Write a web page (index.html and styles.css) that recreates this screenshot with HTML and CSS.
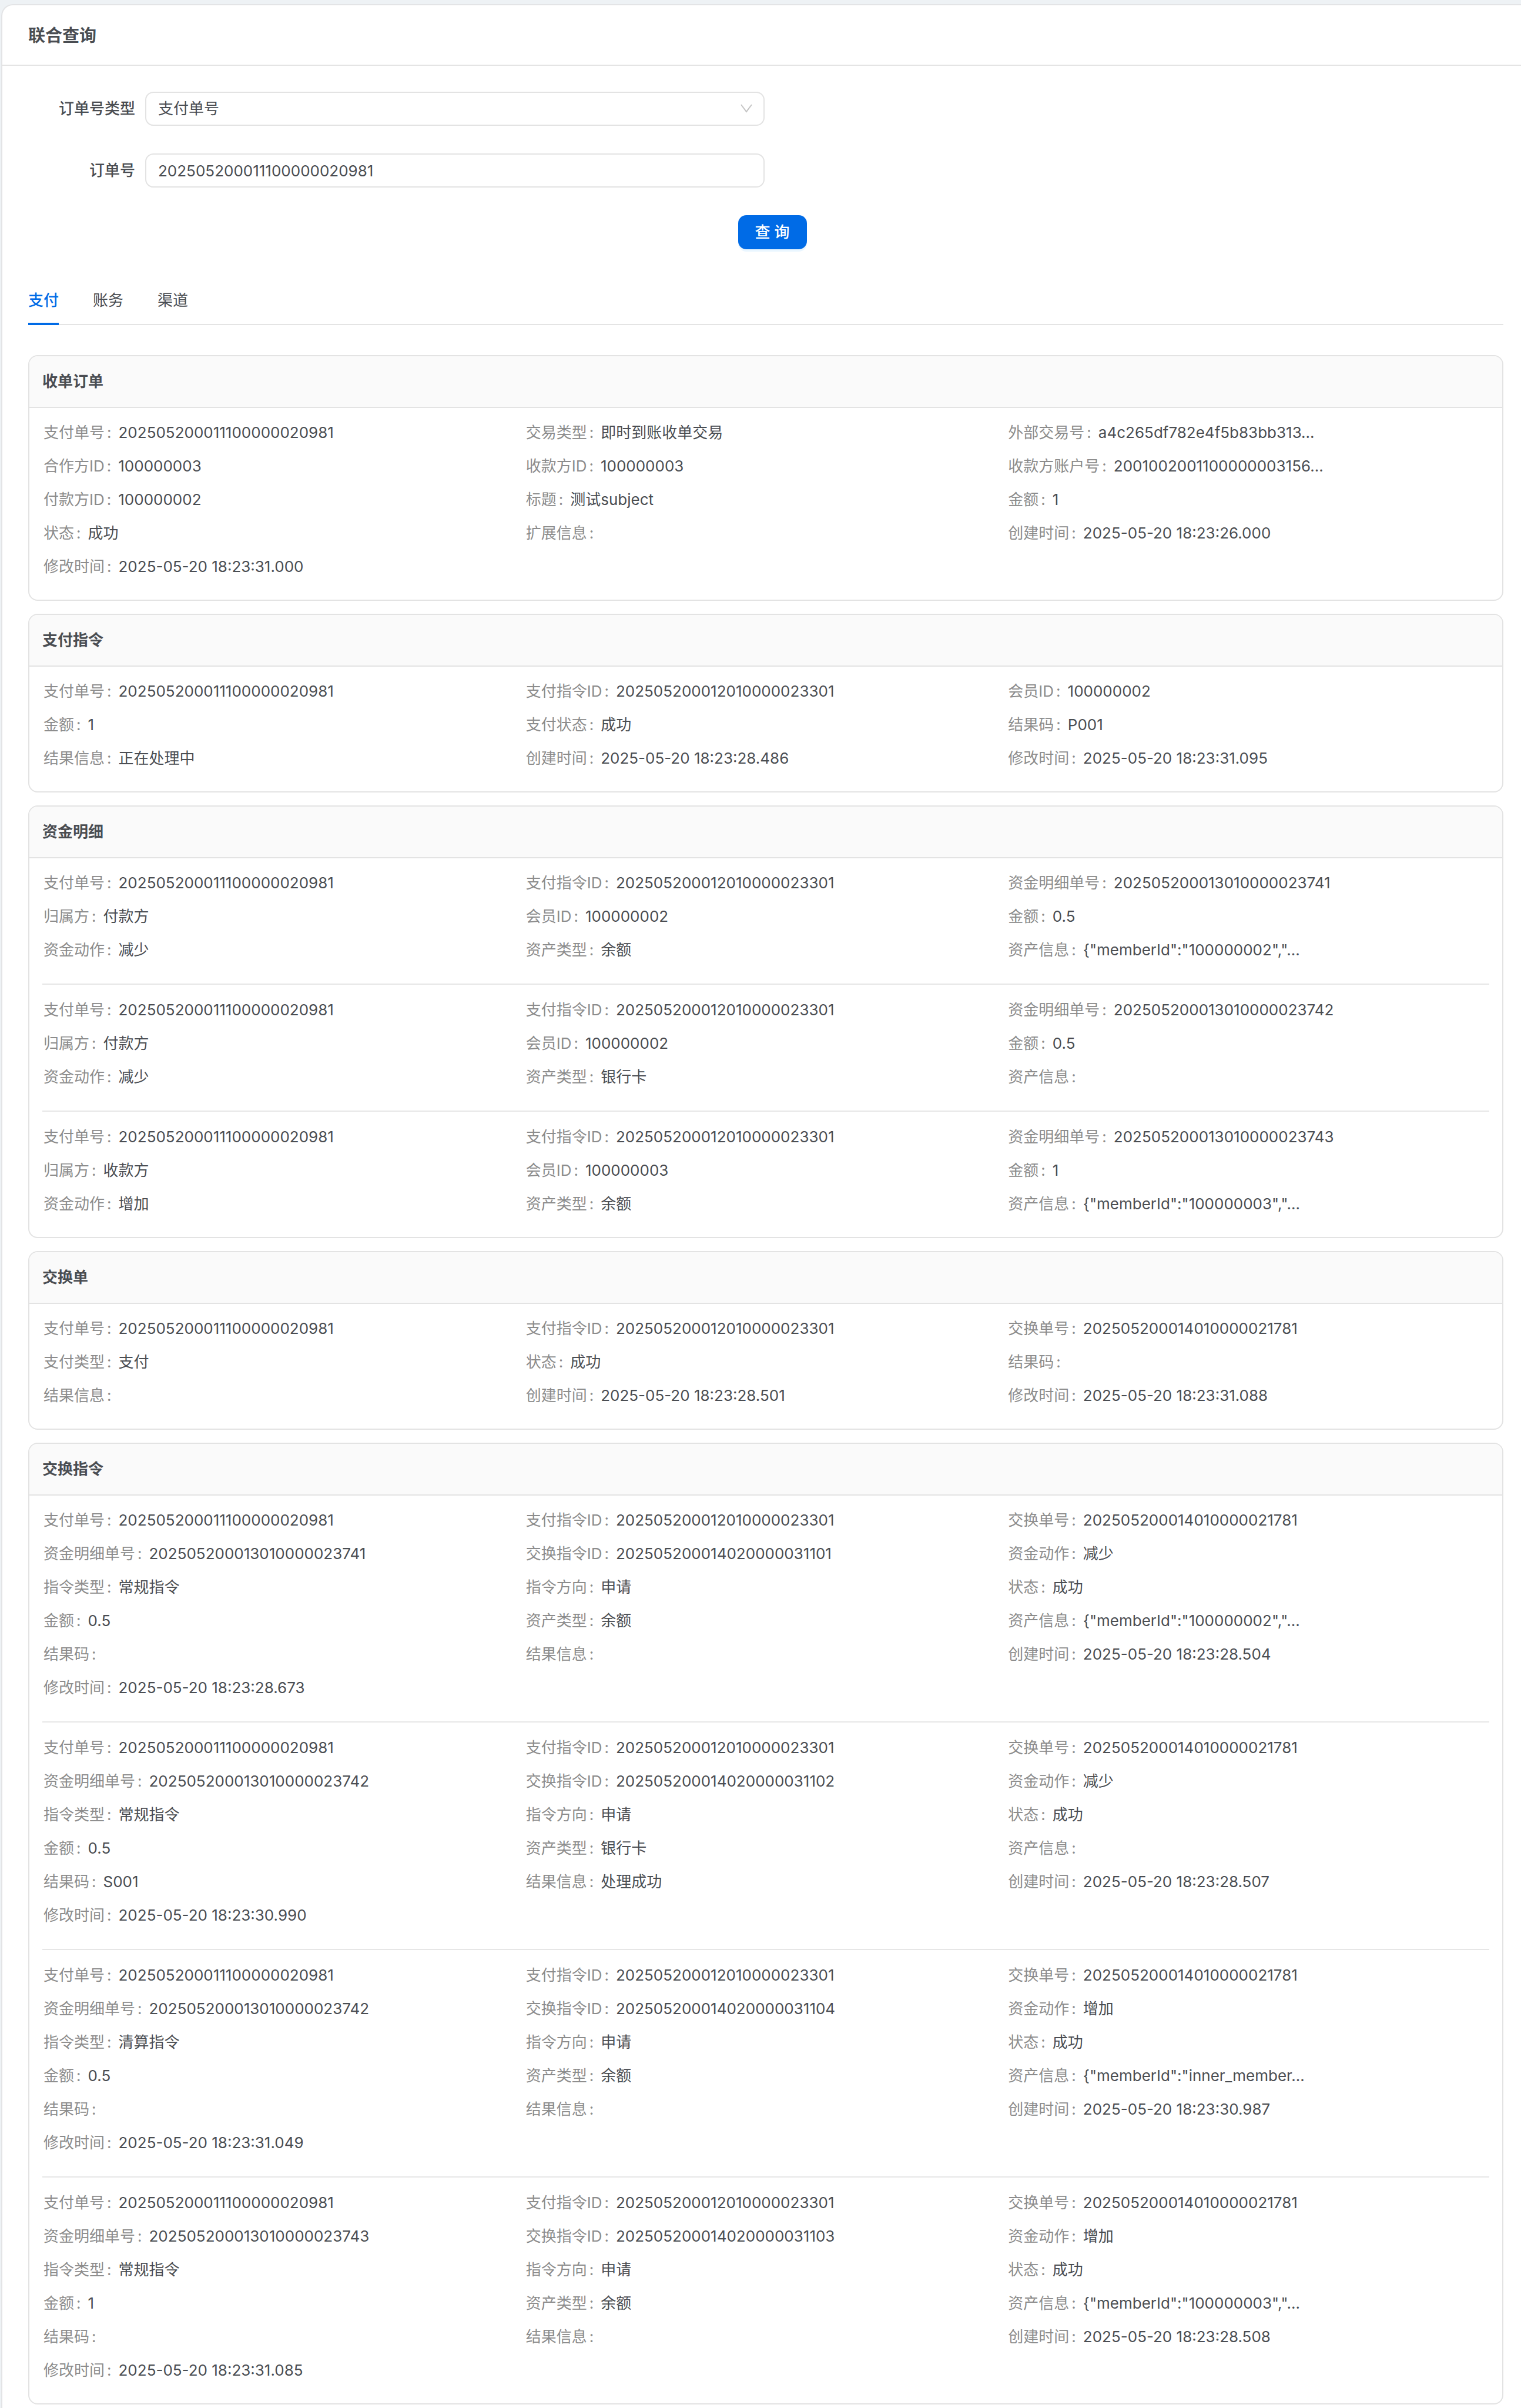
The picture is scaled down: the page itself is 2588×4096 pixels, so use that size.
FILE: index.html
```html
<!DOCTYPE html>
<html lang="zh-CN">
<head>
<meta charset="utf-8">
<meta name="viewport" content="width=device-width, initial-scale=1">
<title>联合查询</title>
<link rel="stylesheet" href="styles.css">
</head>
<body>
<main class="panel">
  <header class="panel-head"><h1 class="panel-title">联合查询</h1></header>
  <div class="panel-body">
    <form class="query">
      <div class="field">
        <label class="field-label" for="order-type">订单号类型</label>
        <div class="select-wrap">
          <select class="control" id="order-type"><option>支付单号</option></select>
          <svg class="select-arrow" viewBox="0 0 22 22" aria-hidden="true"><path d="M2 4 L11 16 L20 4" fill="none" stroke="#c4c4c4" stroke-width="2"/></svg>
        </div>
      </div>
      <div class="field">
        <label class="field-label" for="order-no">订单号</label>
        <input class="control" id="order-no" type="text" value="202505200011100000020981">
      </div>
      <div class="actions"><button class="btn-primary" type="button">查 询</button></div>
    </form>
    <nav class="tabs">
      <a class="tab tab-active" href="#pay">支付</a>
      <a class="tab" href="#account">账务</a>
      <a class="tab" href="#channel">渠道</a>
    </nav>
    <div class="cards" id="cards"></div>
  </div>
</main>
<script src="data.js"></script>
</body>
</html>
```
FILE: styles.css
```css
* { box-sizing: border-box; }

body {
  margin: 0;
  background: #eef2f5;
  color: #4a4d52;
  font-family: Inter, "Noto Sans CJK SC", sans-serif;
  font-size: 26px;
  line-height: 40px;
}

.panel {
  margin: 7px 0 0 2px;
  min-height: calc(100vh - 7px);
  background: #fff;
  border: 2px solid #e3e4e6;
  border-width: 2px 0 0 2px;
  border-radius: 20px 0 0 0;
}

.panel-head {
  display: flex;
  align-items: center;
  height: 103px;
  padding: 2px 44px 0;
  border-bottom: 2px solid #e4e4e4;
}

.panel-title { margin: 0; font-size: 29px; font-weight: 600; }

.panel-body { padding: 44px 30px 6px 44px; }

.query { display: flex; flex-direction: column; gap: 47px; }

.field { display: flex; align-items: center; gap: 17px; width: 50%; padding-right: 2px; }

.field-label { width: 182px; flex: none; text-align: right; font-weight: 500; }

.select-wrap { position: relative; flex: 1; display: flex; }

.control {
  flex: 1;
  width: 100%;
  height: 58px;
  padding: 0 20px;
  border: 2px solid #e3e3e3;
  border-radius: 14px;
  background: #fff;
  color: inherit;
  font: inherit;
  appearance: none;
}

.select-arrow { position: absolute; right: 20px; top: 18px; width: 22px; height: 22px; pointer-events: none; }

.actions { display: flex; justify-content: center; padding-left: 22px; }

.btn-primary {
  width: 117px;
  height: 58px;
  padding: 0;
  border: 0;
  border-radius: 14px;
  background: #006be6;
  box-shadow: 0 4px 0 #eaf6ff;
  color: #fff;
  font: inherit;
  font-weight: 500;
}

.tabs { display: flex; gap: 58px; margin-top: 60px; border-bottom: 2px solid #e4e4e4; }

.tab {
  padding: 7px 0 18px;
  margin-bottom: -2px;
  border-bottom: 4px solid transparent;
  color: inherit;
  text-decoration: none;
}

.tab-active { color: #006be6; border-color: #006be6; font-weight: 500; }

.cards { display: flex; flex-direction: column; gap: 22px; margin-top: 51px; }

.card { border: 2px solid #e3e3e3; border-radius: 16px; overflow: hidden; }

.card-title {
  margin: 0;
  padding: 23px 22px;
  border-bottom: 2px solid #e3e3e3;
  background: #fafafa;
  font-size: 26px;
  line-height: 40px;
  font-weight: 600;
}

.card-body { padding: 22px 22px 19px; }

.record { display: grid; grid-template-columns: repeat(3, 1fr); margin: 0; }

.record + .record { margin-top: 20px; padding-top: 23px; border-top: 2px solid #e6e6e6; }

.item { display: flex; padding: 0 0 17px 2px; }

.item dt { color: #8c8c8c; }

.item dt::after { content: ":"; margin: 0 12px 0 4px; }

.item dd { margin: 0; }
```
FILE: data.js
```js
const PAY = ['支付单号', '202505200011100000020981'];
const CMD = ['支付指令ID', '202505200012010000023301'];
const SWAP = ['交换单号', '202505200014010000021781'];

const fund = (no, owner, member, amount, action, asset, info) => [
  PAY, CMD, ['资金明细单号', no],
  ['归属方', owner], ['会员ID', member], ['金额', amount],
  ['资金动作', action], ['资产类型', asset], ['资产信息', info],
];

const swap = (fundNo, no, action, type, amount, asset, info, code, msg, created, updated) => [
  PAY, CMD, SWAP,
  ['资金明细单号', fundNo], ['交换指令ID', no], ['资金动作', action],
  ['指令类型', type], ['指令方向', '申请'], ['状态', '成功'],
  ['金额', amount], ['资产类型', asset], ['资产信息', info],
  ['结果码', code], ['结果信息', msg], ['创建时间', created],
  ['修改时间', updated],
];

const cards = [
  { title: '收单订单', records: [[
    PAY, ['交易类型', '即时到账收单交易'], ['外部交易号', 'a4c265df782e4f5b83bb313...'],
    ['合作方ID', '100000003'], ['收款方ID', '100000003'], ['收款方账户号', '2001002001100000003156...'],
    ['付款方ID', '100000002'], ['标题', '测试subject'], ['金额', '1'],
    ['状态', '成功'], ['扩展信息', ''], ['创建时间', '2025-05-20 18:23:26.000'],
    ['修改时间', '2025-05-20 18:23:31.000'],
  ]] },
  { title: '支付指令', records: [[
    PAY, CMD, ['会员ID', '100000002'],
    ['金额', '1'], ['支付状态', '成功'], ['结果码', 'P001'],
    ['结果信息', '正在处理中'], ['创建时间', '2025-05-20 18:23:28.486'], ['修改时间', '2025-05-20 18:23:31.095'],
  ]] },
  { title: '资金明细', records: [
    fund('202505200013010000023741', '付款方', '100000002', '0.5', '减少', '余额', '{"memberId":"100000002","...'),
    fund('202505200013010000023742', '付款方', '100000002', '0.5', '减少', '银行卡', ''),
    fund('202505200013010000023743', '收款方', '100000003', '1', '增加', '余额', '{"memberId":"100000003","...'),
  ] },
  { title: '交换单', records: [[
    PAY, CMD, SWAP,
    ['支付类型', '支付'], ['状态', '成功'], ['结果码', ''],
    ['结果信息', ''], ['创建时间', '2025-05-20 18:23:28.501'], ['修改时间', '2025-05-20 18:23:31.088'],
  ]] },
  { title: '交换指令', records: [
    swap('202505200013010000023741', '202505200014020000031101', '减少', '常规指令', '0.5', '余额', '{"memberId":"100000002","...', '', '', '2025-05-20 18:23:28.504', '2025-05-20 18:23:28.673'),
    swap('202505200013010000023742', '202505200014020000031102', '减少', '常规指令', '0.5', '银行卡', '', 'S001', '处理成功', '2025-05-20 18:23:28.507', '2025-05-20 18:23:30.990'),
    swap('202505200013010000023742', '202505200014020000031104', '增加', '清算指令', '0.5', '余额', '{"memberId":"inner_member...', '', '', '2025-05-20 18:23:30.987', '2025-05-20 18:23:31.049'),
    swap('202505200013010000023743', '202505200014020000031103', '增加', '常规指令', '1', '余额', '{"memberId":"100000003","...', '', '', '2025-05-20 18:23:28.508', '2025-05-20 18:23:31.085'),
  ] },
];

const el = (tag, cls, text) => {
  const node = document.createElement(tag);
  if (cls) node.className = cls;
  if (text) node.textContent = text;
  return node;
};

const root = document.getElementById('cards');
for (const { title, records } of cards) {
  const card = el('section', 'card');
  const body = el('div', 'card-body');
  for (const record of records) {
    const list = el('dl', 'record');
    for (const [name, value] of record) {
      const item = el('div', 'item');
      item.append(el('dt', '', name), el('dd', '', value));
      list.append(item);
    }
    body.append(list);
  }
  card.append(el('h2', 'card-title', title), body);
  root.append(card);
}
```
